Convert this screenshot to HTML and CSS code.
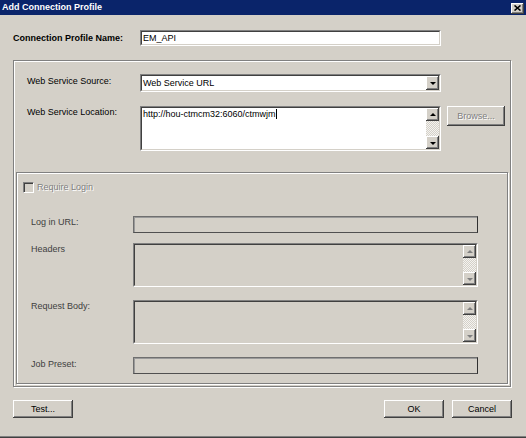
FILE: index.html
```html
<!DOCTYPE html>
<html>
<head>
<meta charset="utf-8">
<title>Add Connection Profile</title>
<link rel="stylesheet" href="styles.css">
</head>
<body>
<div class="window">
  <div class="titlebar">
    <span class="title">Add Connection Profile</span>
    <span class="close"><svg width="7" height="6" viewBox="0 0 7 6"><path d="M0.5 0.5 L6.5 5.5 M6.5 0.5 L0.5 5.5" stroke="#000" stroke-width="1.6" fill="none"/></svg></span>
  </div>

  <div class="name-row">
    <span class="name-label">Connection Profile Name:</span>
    <div class="sunken name-input"><div class="sunken-in white"><span class="value">EM_API</span></div></div>
  </div>

  <div class="frame">
    <div class="source-rows">
      <div class="row row-source">
        <span class="lbl lbl-source">Web Service Source:</span>
        <div class="sunken select"><div class="sunken-in white select-in">
          <span class="value">Web Service URL</span>
          <span class="raised drop"><span class="tri-down"></span></span>
        </div></div>
      </div>
      <div class="row row-loc">
        <span class="lbl">Web Service Location:</span>
        <div class="sunken textarea"><div class="sunken-in white area-in">
          <span class="value area-text">http://hou-ctmcm32:6060/ctmwjm<span class="caret"></span></span>
          <span class="scroll">
            <span class="raised sbtn"><span class="tri-up"></span></span>
            <span class="track"></span>
            <span class="raised sbtn"><span class="tri-down"></span></span>
          </span>
        </div></div>
        <span class="raised btn browse"><span class="dis">Browse...</span></span>
      </div>
    </div>

    <div class="group">
      <div class="check-row">
        <span class="checkbox"></span>
        <span class="dis">Require Login</span>
      </div>
      <div class="frow f1">
        <span class="flbl">Log in URL:</span>
        <div class="flat"></div>
      </div>
      <div class="frow f2">
        <span class="flbl">Headers</span>
        <div class="sunken multi"><div class="sunken-in area-in">
          <span class="value"></span>
          <span class="scroll">
            <span class="raised sbtn"><span class="tri-up grey"></span></span>
            <span class="track"></span>
            <span class="raised sbtn"><span class="tri-down grey"></span></span>
          </span>
        </div></div>
      </div>
      <div class="frow f3">
        <span class="flbl">Request Body:</span>
        <div class="sunken multi"><div class="sunken-in area-in">
          <span class="value"></span>
          <span class="scroll">
            <span class="raised sbtn"><span class="tri-up grey"></span></span>
            <span class="track"></span>
            <span class="raised sbtn"><span class="tri-down grey"></span></span>
          </span>
        </div></div>
      </div>
      <div class="frow f4">
        <span class="flbl">Job Preset:</span>
        <div class="flat"></div>
      </div>
    </div>
  </div>

  <div class="footer">
    <span class="raised btn">Test...</span>
    <span class="spacer"></span>
    <span class="raised btn">OK</span>
    <span class="raised btn">Cancel</span>
  </div>
</div>
</body>
</html>
```

FILE: styles.css
```css
* { box-sizing: border-box; }
html, body { margin: 0; padding: 0; }
body {
  width: 526px;
  height: 438px;
  background: #d4d0c8;
  font-family: "Liberation Sans", Arial, sans-serif;
  font-size: 9px;
  line-height: 11px;
  color: #000;
  overflow: hidden;
}
.window {
  width: 526px;
  height: 438px;
  background: #d4d0c8;
  box-shadow: inset 0 -1px #404040, inset 0 -2px #808080;
}
.titlebar {
  height: 15px;
  background: #0a246a;
  display: flex;
  align-items: center;
  justify-content: space-between;
  padding: 0 2px 0 2px;
}
.title {
  color: #fff;
  font-weight: bold;
  font-size: 9px;
}
.close {
  width: 13px;
  height: 11px;
  background: #d4d0c8;
  display: flex;
  align-items: center;
  justify-content: center;
  box-shadow: inset -1px -1px #404040, inset 1px 1px #fff, inset -2px -2px #808080;
  margin-top: 1px;
}
.close svg { display: block; }

.raised {
  background: #d4d0c8;
  box-shadow: inset -1px -1px #404040, inset 1px 1px #fff, inset -2px -2px #808080;
}
.sunken {
  border: 1px solid;
  border-color: #808080 #fff #fff #808080;
}
.sunken-in {
  border: 1px solid;
  border-color: #404040 #d4d0c8 #d4d0c8 #404040;
  height: 100%;
}
.white { background: #fff; }

.name-row {
  display: flex;
  align-items: center;
  margin-top: 15px;
  padding-left: 13px;
}
.name-label {
  width: 127px;
  font-weight: bold;
}
.name-input {
  width: 301px;
  height: 16px;
}
.name-input .sunken-in {
  display: flex;
  align-items: center;
  padding-left: 1px;
}

.frame {
  margin: 14px 0 0 13px;
  width: 498px;
  height: 327px;
  border: 1px solid #808080;
  box-shadow: inset 1px 1px #fff, 1px 1px #fff;
  padding: 2px;
}
.source-rows {
  padding: 11px 0 0 11px;
  display: flex;
  flex-direction: column;
  gap: 14px;
}
.row {
  display: flex;
  align-items: flex-start;
}
.lbl {
  width: 113px;
  padding-top: 1px;
  color: #000;
}
.lbl-source { padding-top: 2px; }
.select {
  width: 301px;
  height: 18px;
}
.select-in {
  display: flex;
  align-items: center;
  padding-left: 1px;
}
.select-in .value { flex: 1; }
.drop {
  width: 13px;
  height: 14px;
  display: flex;
  align-items: center;
  justify-content: center;
  align-self: stretch;
}
.textarea {
  width: 301px;
  height: 45px;
}
.area-in {
  display: flex;
}
.area-in .value {
  flex: 1;
  padding: 1px 0 0 1px;
}
.area-text { display: block; }
.caret {
  display: inline-block;
  width: 1px;
  height: 10px;
  background: #000;
  vertical-align: -2px;
}
.scroll {
  width: 13px;
  display: flex;
  flex-direction: column;
}
.sbtn {
  height: 13px;
  display: flex;
  align-items: center;
  justify-content: center;
}
.track {
  flex: 1;
  background-image: repeating-conic-gradient(#f4f3f0 0 25%, #d4d0c8 0 50%);
  background-size: 2px 2px;
}
.tri-down, .tri-up {
  width: 0;
  height: 0;
  border-left: 3px solid transparent;
  border-right: 3px solid transparent;
}
.tri-down { border-top: 3px solid #000; margin-top: 1px; }
.tri-up { border-bottom: 3px solid #000; margin-bottom: 1px; }
.tri-down.grey { border-top-color: #808080; }
.tri-up.grey { border-bottom-color: #808080; }

.btn {
  width: 60px;
  height: 18px;
  display: flex;
  align-items: center;
  justify-content: center;
}
.browse {
  width: 58px;
  height: 20px;
  margin-left: 6px;
}
.dis {
  color: #808080;
  text-shadow: 1px 1px #fff;
}

.group {
  margin-top: 21px;
  width: 492px;
  height: 212px;
  border: 1px solid #808080;
  box-shadow: inset 1px 1px #fff, 1px 1px #fff;
  padding: 9px 0 0 6px;
}
.check-row {
  display: flex;
  align-items: center;
  gap: 3px;
  height: 11px;
}
.checkbox {
  width: 11px;
  height: 11px;
  border: 1px solid;
  border-color: #808080 #fff #fff #808080;
  box-shadow: inset 1px 1px #404040, inset -1px -1px #d4d0c8;
  background: #d4d0c8;
}
.frow {
  display: flex;
  align-items: flex-start;
  padding-left: 8px;
}
.f1 { margin-top: 23px; }
.f2 { margin-top: 10px; }
.f3 { margin-top: 13px; }
.f4 { margin-top: 13px; }
.flbl {
  width: 102px;
  color: #404040;
  padding-top: 1px;
}
.f4 .flbl { padding-top: 2px; }
.flat {
  width: 345px;
  height: 17px;
  border: 1px solid;
  border-color: #6f6f6f #303030 #505050 #6f6f6f;
  box-shadow: inset 1px 1px #9a9a9a;
}
.multi {
  width: 345px;
  height: 44px;
}

.footer {
  display: flex;
  margin-top: 13px;
  padding: 0 14px 0 13px;
  gap: 8px;
}
.spacer { flex: 1; }
```
